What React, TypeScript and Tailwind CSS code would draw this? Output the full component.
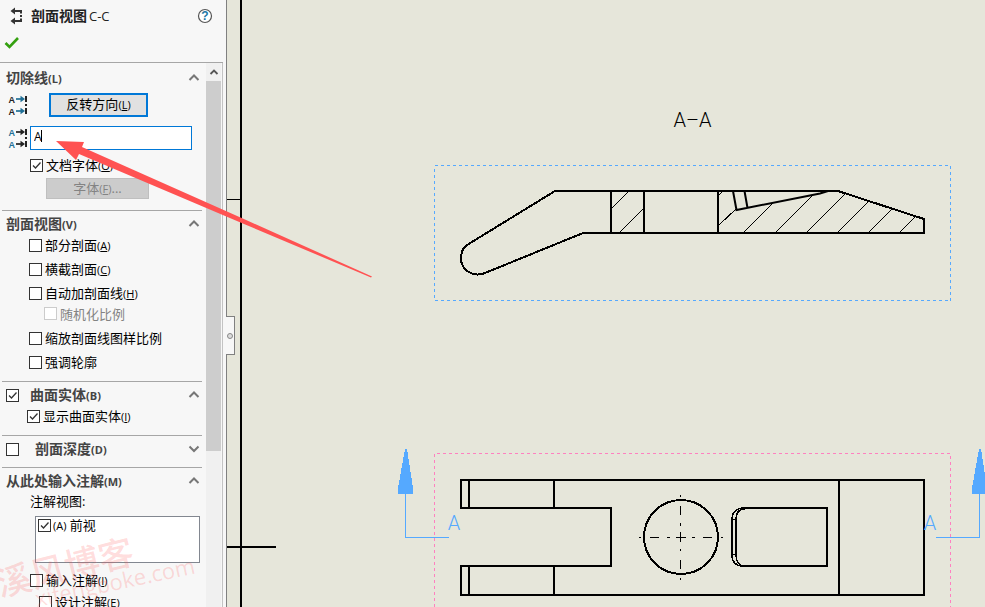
import { useState } from 'react'
import type { ReactNode } from 'react'

interface CheckProps {
  label: ReactNode
  hotkey?: string
  defaultChecked?: boolean
  disabled?: boolean
  heading?: boolean
  className: string
}

const Mnemonic = ({ letter, plain }: { letter: string; plain?: boolean }) => (
  <span className="text-[11px]">({plain ? letter : <u className="underline-offset-1">{letter}</u>})</span>
)

const Check = ({ label, hotkey, defaultChecked, disabled, heading, className }: CheckProps) => (
  <label className={`flex items-center ${disabled ? 'text-[#838383]' : ''} ${className}`}>
    <span className="grid shrink-0">
      <input
        type="checkbox"
        defaultChecked={defaultChecked}
        disabled={disabled}
        className="peer col-start-1 row-start-1 size-[13px] appearance-none border border-[#333] bg-white disabled:border-[#ccc]"
      />
      <svg
        viewBox="0 0 13 13"
        className="pointer-events-none invisible col-start-1 row-start-1 size-[13px] peer-checked:visible"
      >
        <path d="M3 6.5 5.5 9 10.5 3.5" fill="none" stroke="#333" strokeWidth="1.3" />
      </svg>
    </span>
    <span className="whitespace-nowrap">
      {label}
      {hotkey ? <Mnemonic letter={hotkey} plain={heading} /> : null}
    </span>
  </label>
)

const Chevron = ({ down }: { down?: boolean }) => (
  <svg viewBox="0 0 12 8" className="h-2 w-3 shrink-0">
    <path d={down ? 'M1.5 1.5 6 6l4.5-4.5' : 'M1.5 6 6 1.5 10.5 6'} fill="none" stroke="#777" strokeWidth="2" />
  </svg>
)

interface SectionProps {
  title: ReactNode
  open?: boolean
  headClass: string
  className?: string
  children?: ReactNode
}

const Section = ({ title, open = true, headClass, className = '', children }: SectionProps) => {
  const [expanded, setExpanded] = useState(open)

  return (
    <section className={className}>
      <div className={`flex items-center justify-between pr-0.5 text-sm font-bold text-[#444] ${headClass}`}>
        {title}
        <button type="button" aria-label="展开" onClick={() => setExpanded(!expanded)}>
          <Chevron down={!expanded} />
        </button>
      </div>
      {expanded ? children : null}
    </section>
  )
}

const LabelIcon = ({ letter, arrow }: { letter: string; arrow: string }) => (
  <svg viewBox="0 0 20 20" className="h-5 w-5 shrink-0">
    {[0, 12].map((y) => (
      <g key={y}>
        <text x="0.5" y={y + 7.5} fontSize="9" fontWeight="bold" fill={letter} fontFamily="Liberation Sans">
          A
        </text>
        <path d={`M8 ${y + 4}h6`} stroke={arrow} strokeWidth="1.7" />
        <path d={`M12.5 ${y + 0.8}l4.500 3.200-4.500 3.200z`} fill={arrow} />
      </g>
    ))}
    <path d="M18 1v6M18 9v2M18 13v6" stroke="#222" strokeWidth="2" />
  </svg>
)

const Panel = () => (
  <aside className="flex h-full w-[227px] shrink-0 flex-col border-r border-[#808080] bg-[#f7f7f7]">
    <header className="mr-[3px] h-[63px] shrink-0 border-b border-[#a6a6a6] pt-2">
      <div className="flex h-4 items-center pr-2.5 pl-2">
        <svg viewBox="0 0 16 20" className="h-5 w-4">
          <path d="M6 5h7v2.500M13 9v2M13 12.500V15H6" fill="none" stroke="#333" strokeWidth="2" />
          <path d="M2.500 5 7 1.500v7zM2.500 15 7 11.500v7z" fill="#333" />
        </svg>
        <h1 className="ml-[7px] flex-1 text-sm font-bold text-[#222]">
          剖面视图<span className="pl-0.5 text-[13px] font-medium">C-C</span>
        </h1>
        <button type="button" aria-label="帮助">
          <svg viewBox="0 0 16 16" className="size-4">
            <circle cx="8" cy="8" r="6.500" fill="#fff" stroke="#555" strokeWidth="1.200" />
            <text x="8" y="12" textAnchor="middle" fontSize="12" fontWeight="bold" fill="#2277a5" fontFamily="Liberation Sans">
              ?
            </text>
          </svg>
        </button>
      </div>
      <button type="button" aria-label="确定" className="mt-3 ml-1 block">
        <svg viewBox="0 0 16 14" className="h-3.5 w-4">
          <path d="M1.500 7 5.500 11 14 2" fill="none" stroke="#35a010" strokeWidth="2.600" />
        </svg>
      </button>
    </header>

    <div className="mr-[3px] flex min-h-0 flex-1 border-r border-[#c3c3c3]">
      <div className="min-w-0 flex-1 overflow-hidden pr-1 pl-0.5">
        <div className="divide-y divide-[#a6a6a6]">
          <Section title={<h2 className="pl-1">切除线<Mnemonic letter="L" plain /></h2>} headClass="h-[30px]" className="pb-[11px]">
            <div className="flex h-6 items-center pl-1.5">
              <LabelIcon letter="#222" arrow="#1f6f96" />
              <button type="button" className="ml-[21px] h-6 w-[99px] border-2 border-[#0078d7] bg-[#e1e1e1] pb-0.5">
                反转方向<Mnemonic letter="L" />
              </button>
            </div>
            <div className="mt-[9px] flex items-center pl-1.5">
              <LabelIcon letter="#1f6f96" arrow="#222" />
              <input
                aria-label="标号"
                defaultValue="A"
                className="ml-0.5 h-6 w-[162px] border border-[#0078d7] bg-white px-[3px] pb-1 text-xs caret-transparent outline-none"
              />
            </div>
            <Check label="文档字体" hotkey="O" defaultChecked className="mt-[5px] h-5 gap-[3px] pl-7" />
            <button
              type="button"
              disabled
              className="mt-[3px] ml-11 block h-[21px] w-[103px] border border-[#bfbfbf] bg-[#ccc] leading-4 text-[#838383]"
            >
              字体<Mnemonic letter="F" />...
            </button>
          </Section>

          <Section title={<h2 className="pl-1">剖面视图<Mnemonic letter="V" plain /></h2>} headClass="h-[22px] pt-[3px]" className="pb-[7px]">
            <Check label="部分剖面" hotkey="A" className="h-6 gap-[3px] pl-[27px]" />
            <Check label="横截剖面" hotkey="C" className="h-6 gap-[3px] pl-[27px]" />
            <Check label="自动加剖面线" hotkey="H" className="h-6 gap-[3px] pl-[27px]" />
            <Check label="随机化比例" disabled className="mb-1 h-[17px] gap-[3px] pl-[42px]" />
            <Check label="缩放剖面线图样比例" className="h-6 gap-[3px] pl-[27px]" />
            <Check label="强调轮廓" className="h-6 gap-[3px] pl-[27px]" />
          </Section>

          <Section
            title={<Check label="曲面实体" hotkey="B" heading defaultChecked className="gap-[11px] pl-1" />}
            headClass="h-[26px]"
            className="pb-2.5"
          >
            <Check label="显示曲面实体" hotkey="I" defaultChecked className="h-[17px] gap-[3px] pl-[25px]" />
          </Section>

          <Section
            title={<Check label="剖面深度" hotkey="D" heading className="gap-4 pl-1" />}
            open={false}
            headClass="h-[26px]"
            className="pb-[5px]"
          />

          <Section title={<h2 className="pl-1">从此处输入注解<Mnemonic letter="M" plain /></h2>} headClass="h-[26px]">
            <p className="pl-7 leading-[14px]">注解视图:</p>
            <div className="mt-2 mr-0.5 ml-[33px] h-[47px] border border-[#828790] bg-white pl-0.5">
              <Check
                label={
                  <>
                    <span className="text-[11px]">(A)</span> 前视
                  </>
                }
                defaultChecked
                className="h-4 gap-0.5"
              />
            </div>
            <Check label="输入注解" hotkey="I" className="mt-2 h-[18px] gap-[3px] pl-7" />
            <Check label="设计注解" hotkey="E" className="mt-1 h-[18px] gap-[3px] pl-[37px]" />
          </Section>
        </div>
      </div>
      <div className="mr-px w-[15px] bg-[#f0f0f0]">
        <div className="flex h-[18px] items-center justify-center">
          <svg viewBox="0 0 10 8" className="h-2 w-2.5">
            <path d="M1.500 6 5 2.500 8.500 6" fill="none" stroke="#555" strokeWidth="1.800" />
          </svg>
        </div>
        <div className="h-[68%] bg-[#cdcdcd]" />
      </div>
    </div>
  </aside>
)

const CutArrow = ({ x }: { x: number }) => <path d={`M${x} 449h2l6 39v6h-15v-6z`} fill="#55a9ff" />

const Drawing = () => (
  <svg viewBox="227 0 758 607" preserveAspectRatio="xMinYMin slice" className="h-full w-full" fill="none">
    {/* sheet frame */}
    <g stroke="#000">
      <path d="M241 0V607M227 547H276" strokeWidth="2" />
      <path d="M227 199.5H240" />
    </g>

    <text x="692.500" y="127" textAnchor="middle" fill="#000" fontFamily="Roboto, sans-serif" fontSize="20" fontWeight="300">
      A–A
    </text>

    {/* section view */}
    <g shapeRendering="crispEdges">
      <rect x="434.5" y="165.5" width="516" height="135" stroke="#55a9ff" strokeDasharray="3 3" />
      <g stroke="#000" strokeWidth="2">
        <path d="M555 191H838L924 219V233H583L485 273C473 278 461 270 461 258C461 252 463 248 467 245Z" />
        <path d="M611 191V233M644 191V233M718 191V233" />
        <path d="M733 191 736.500 210 820 193.500 828 191M744.500 191 747.500 208" shapeRendering="geometricPrecision" />
      </g>
      <path
        d="M612 208 628 192M620 232 643 209M719 225 736 209M719 195 722 192M744 232 773 203M776 232 813 195M807 232 845 194M838 232 868 202M869 232 892 209M900 232 915 217"
        stroke="#000"
      />
    </g>

    {/* top view */}
    <g shapeRendering="crispEdges">
      <path d="M434.500 607V453.500H950.500V607" stroke="#ff80c0" strokeDasharray="3 3" />
      <g stroke="#000" strokeWidth="2">
        <path d="M461 480H924V595H461V566H611V508H461ZM469 480V508M469 566V595M554 480V508M554 566V595M839 480V595" />
        <circle cx="681" cy="537" r="37" />
        <path d="M745 508H827V566H741M732 519V555M736 519V555" />
      </g>
      <path
        d="M732 519C732 512 736 508 745 508M736 520C736 513 739 509 745 509M732 555C732 562 736 566 743 566M736 555C736 561 739 565 743 566M732 519.500H736M732 554.500H736"
        stroke="#000"
        strokeWidth="1.500"
      />
      <path
        d="M639 537.500h2M650 537.500h9M667 537.500h3M676 537.500h10M692 537.500h3M703 537.500h9M721 537.500h2M680.500 495v2M680.500 506v9M680.500 523v3M680.500 532v10M680.500 549v2M680.500 560v9M680.500 578v2"
        stroke="#000"
      />
      <path d="M405.500 494V537.500H449M936 537.500H979.500V494" stroke="#55a9ff" />
      <CutArrow x={405} />
      <CutArrow x={979} />
    </g>
    <g fill="#55a9ff" fontFamily="Roboto, sans-serif" fontSize="20" fontWeight="300" textAnchor="middle">
      <text x="454" y="530">A</text>
      <text x="930" y="530">A</text>
    </g>
  </svg>
)

export default function App() {
  return (
    <div className="relative flex h-screen overflow-hidden bg-[#e6e6da] font-['Open_Sans','Noto_Sans_CJK_SC',sans-serif] text-[13px] leading-4 text-black">
      <Panel />
      <main className="min-w-0 flex-1">
        <Drawing />
      </main>

      <button
        type="button"
        aria-label="折叠面板"
        className="absolute top-[316px] left-[226px] flex h-[39px] w-[9px] items-center justify-center border border-l-0 border-[#808080] bg-[#f7f7f7]"
      >
        <span className="size-1.5 shrink-0 rounded-full border border-[#888] bg-[#ddd]" />
      </button>

      {/* caret, watermark and pointer sit on top of everything */}
      <svg viewBox="0 0 400 607" className="pointer-events-none absolute top-0 left-0 h-[607px] w-[400px]">
        <path d="M41.500 130v12" stroke="#000" />
        <g fill="#ff5050" fillOpacity="0.2" fontFamily="Open Sans, Noto Sans CJK SC, sans-serif" fontWeight="500">
          <text fontSize="35" transform="translate(0 597) rotate(-14)">
            溪风博客
          </text>
          <text fontSize="22" transform="translate(37 607) rotate(-12)">
            xifengboke.com
          </text>
        </g>
        <path d="M56 141 84 142 82 147 245 219.500 372 276.500 371 277.500 244 224 79 154 76 160Z" fill="#ff5252" />
      </svg>
    </div>
  )
}
